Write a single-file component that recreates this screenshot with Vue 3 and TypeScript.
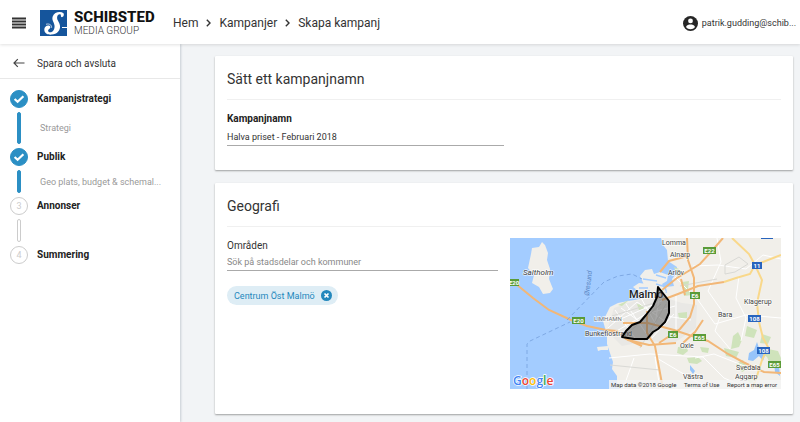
<script setup lang="ts">
import { ref } from 'vue'

interface Step {
  title: string
  sub?: string
  done: boolean
}

const steps: Step[] = [
  { title: 'Kampanjstrategi', sub: 'Strategi', done: true },
  { title: 'Publik', sub: 'Geo plats, budget & schemal...', done: true },
  { title: 'Annonser', done: false },
  { title: 'Summering', done: false },
]

const campaignName = ref('Halva priset - Februari 2018')
const areaQuery = ref('')
const areas = ref<string[]>(['Centrum Öst Malmö'])

function removeArea(name: string): void {
  areas.value = areas.value.filter((a) => a !== name)
}
</script>

<template>
  <div class="app">
    <header class="topbar">
      <button class="menu" type="button" aria-label="Meny">
        <svg width="14" height="12" viewBox="0 0 14 12"><path d="M0 1.500h14M0 4.500h14M0 7.500h14M0 10.500h14" stroke="#333" stroke-width="1.900" /></svg>
      </button>
      <a class="brand" href="#">
        <svg width="27" height="26" viewBox="0 0 27 26">
          <path d="M0 0h27v26H0z" fill="#15559c" />
          <path d="M23.500 3.200C20.500 1 14.200 2 12.700 6.500C11.500 10 14 12 14.500 15.500C15.100 19.600 12.300 23 9.300 22.200C7.600 21.700 7.800 20 9.200 19.100C11 17.900 10.700 15.800 8.900 15.500C6.400 15.100 4.200 17 4.300 19.700C4.500 23.300 7.600 24.900 11.600 24.600C17.100 24.200 20.500 20.500 20 15.700C19.600 12.200 16.800 10.400 17.100 7.300C17.300 5 18.900 3.900 20.200 4.300C21.600 4.800 20.300 6.300 21.300 7C22.600 7.800 24.700 5.300 23.500 3.200Z" fill="#fff" />
          <path d="M22 17.500h5" stroke="#fff" stroke-width="1" />
          <path d="M6 14.300c3-1 6 .5 5.600 3.500" fill="none" stroke="#fff" stroke-width=".7" />
        </svg>
        <span class="brand-text"><strong>SCHIBSTED</strong><span>MEDIA GROUP</span></span>
      </a>
      <nav class="crumbs" aria-label="Sökväg">
        <a href="#">Hem</a>
        <svg width="5" height="8" viewBox="0 0 5 8"><path d="M.8.8 4 4 .8 7.200" /></svg>
        <a href="#">Kampanjer</a>
        <svg width="5" height="8" viewBox="0 0 5 8"><path d="M.8.8 4 4 .8 7.200" /></svg>
        <a href="#">Skapa kampanj</a>
      </nav>
      <button class="user" type="button">
        <svg width="15" height="15" viewBox="0 0 15 15">
          <circle cx="7.500" cy="7.500" r="7.500" fill="#262626" />
          <circle cx="7.500" cy="4.900" r="2.400" fill="#fff" />
          <path d="M3 11c.6-1.900 2.800-2.500 4.500-2.500s3.900.6 4.500 2.500c-1.100 1.500-2.700 2.200-4.500 2.200S4.100 12.500 3 11Z" fill="#fff" />
        </svg>
        <span>patrik.gudding@schib...</span>
      </button>
    </header>

    <div class="body">
      <aside class="sidebar">
        <a class="back" href="#">
          <svg width="12" height="10" viewBox="0 0 12 10"><path d="M11.500 5H1M4.800 1.200 1 5l3.800 3.800" fill="none" stroke="#444" stroke-width="1.200" /></svg>
          <span>Spara och avsluta</span>
        </a>
        <ol class="steps">
          <li v-for="(step, i) in steps" :key="step.title" :class="['step', { done: step.done, tall: i === 0 }]">
            <div class="rail">
              <span class="dot">
                <svg v-if="step.done" width="12" height="10" viewBox="0 0 12 10"><path d="m1.600 5 3 2.800 5.800-5.600" fill="none" stroke="#fff" stroke-width="2.200" /></svg>
                <template v-else>{{ i + 1 }}</template>
              </span>
              <span v-if="i < steps.length - 1" class="bar"></span>
            </div>
            <div class="step-text">
              <strong>{{ step.title }}</strong>
              <span v-if="step.sub" class="sub">{{ step.sub }}</span>
            </div>
          </li>
        </ol>
      </aside>

      <main class="main">
        <section class="card">
          <h2>Sätt ett kampanjnamn</h2>
          <div class="field name-field">
            <label class="strong" for="name">Kampanjnamn</label>
            <input id="name" v-model="campaignName" type="text" />
          </div>
        </section>

        <section class="card geo">
          <h2>Geografi</h2>
          <div class="geo-row">
            <div class="geo-form">
              <div class="field">
                <label for="area">Områden</label>
                <input id="area" v-model="areaQuery" class="compact" type="text" placeholder="Sök på stadsdelar och kommuner" />
              </div>
              <div class="chips">
                <span v-for="area in areas" :key="area" class="chip">
                  {{ area }}
                  <button type="button" :aria-label="'Ta bort ' + area" @click="removeArea(area)">
                    <svg width="11" height="11" viewBox="0 0 11 11"><circle cx="5.500" cy="5.500" r="5.500" fill="#2488bd" /><path d="m3.500 3.500 4 4m0-4-4 4" stroke="#fff" stroke-width="1.700" /></svg>
                  </button>
                </span>
              </div>
            </div>
            <svg class="map" viewBox="0 0 271 151">
              <path d="M0 0h271v151H0z" fill="#a3ccff" />
              <!-- mainland -->
              <path d="M151 0 153 7 157 12 158 23 167 29 166 36 162 41 164 48 156 49 157 55 149 52 145 56 137 57 133 60 125 62 118 63 108 65 100 69 98 73 93 83 95 90 97 98 97 106 99 112 101 118 103 124 102 131 107 138 107 145 110 151H271V0Z" fill="#f1efea" />
              <path d="M87 109 98 108v4h-7l-3 1ZM130 38l5-6 7-1 2 5 6-2 8 3-1 6-5 3 4 8-10 4-15-3 3-8Z" fill="#f1efea" />
              <path d="M123 49l6-4 8 1 7 7-5 7-9-3-3-5Z" fill="#f1efea" />
              <path d="M129 50h9M132 54l8-1M146 37l10 3M133 41l14 2M146 46l10 3" stroke="#a3ccff" stroke-width="1.500" />
              <!-- built-up area -->
              <path d="M104 70 124 63 153 59 172 65 187 67 186 90 164 105 137 103 112 108 97 93Z" fill="#e9e8e5" />
              <!-- island -->
              <path d="M32 4 35 7 38 15 37 22 40 31 39 41 43 51 40 55 33 56 29 49 22 45 24 37 18 30 21 16 22 10 29 9Z" fill="#f1efea" />
              <g fill="#cfe3bb">
                <path d="M108 67 119 62l-7 6ZM164 29l3 9 4 1-2-8ZM172 44l7-1-1 8 4 6-8 1ZM127 66l6 1 1 4-5 1ZM168 75l9-1v6l-8 1ZM168 109l8-1 2 5-5 4-6-2ZM177 120l11-1 4 4-5 3-8-1ZM190 109l9 1-1 5-6-1Z" />
                <path d="M223 98 228 94 232 102 229 109 221 111ZM214 110 229 114 226 120 216 118ZM237 88 247 92 244 100 235 98ZM249 114 258 111 268 113 271 120 271 127 260 126 257 119ZM226 126l7-4 5 9-6 3ZM235 140l7 0 3 4-5 1ZM252 96l9 3-3 7-8-1Z" />
              </g>
              <g fill="#96c4fa"><path d="M247 104l3 9 5 4-2 6-4-5-6 5-5-1 1-7 5-3ZM264 124l5 4 1 10-5-4ZM180 127l5 6-2 3-3-4Z" /></g>
              <!-- minor roads -->
              <g fill="none" stroke="#fff" stroke-width="1">
                <path d="M98 90 127 64 156 84M104 84 156 61M105 72 125 100M116 66 138 98M131 60 149 92M98 98 136 76 165 68M150 54 145 87M140 102 164 76M124 120 113 151M99 120 140 116 193 119 214 140 240 151M150 151 145 119 199 151M183 28 208 27 236 31 253 17 271 21M165 39 188 62 205 86 236 77 271 80M207 0 211 24 198 53 212 73 205 93 220 111M229 38 226 60 236 80 231 103M185 120 204 116 237 129M111 70 133 86M156 78 181 82M166 56 166 93" />
              </g>
              <g fill="none" stroke="#d9d9d5" stroke-width="1"><path d="M102 78 144 65M117 96 151 66M130 110 156 66M100 127 150 132M170 48 207 41M215 36v-9l14-8 9 7-13 8Z" /></g>
              <!-- main roads -->
              <g fill="none" stroke="#f2b777" stroke-width="2">
                <path d="M6 46 23 60 39 72 61 82 77 88 96 92 110 95 118 102 139 107 166 105M96 92 107 93 116 101 132 108" />
                <path d="M177 0 178 22 184 40 184 66 180 79 170 91 149 105M213 0 200 15 190 26 167 40 152 52M150 34 159 23 178 18M152 62 168 56 188 48 214 44M171 41 175 57M113 85 138 85 164 92 185 99 198 103 218 116 233 124 254 134 271 135M137 73 137 95 145 108 153 151M173 105 185 94 193 82" />
              </g>
              <g fill="none" stroke="#f9d88a" stroke-width="2"><path d="M222 0 239 16 245 27 240 36 226 40 214 44M245 27 271 17M245 27 252 42 247 65 249 84 253 100 258 109 252 122 247 138 242 151" /></g>
              <!-- ferry lines -->
              <g fill="none" stroke="#7fa9e4" stroke-width="1" stroke-dasharray="4 3"><path d="M57 82 94 44 108 38 122 36 132 41M17 151V106L20 103 60 84" /></g>
              <g class="place">
                <text x="13" y="37" class="island">Saltholm</text>
                <text x="152" y="7">Lomma</text><text x="160" y="19">Alnarp</text><text x="158" y="37">Arlöv</text>
                <text x="119" y="60" class="city">Malmö</text>
                <text x="84" y="83" class="district">LIMHAMN</text>
                <text x="75" y="98">Bunkeflostrand</text>
                <text x="234" y="66">Klagerup</text><text x="208" y="79">Bara</text><text x="170" y="110">Oxie</text>
                <text x="226" y="132">Svedala</text><text x="225" y="141">Aggarp</text><text x="173" y="141">Västra</text>
                <text x="79" y="58" class="sea" transform="rotate(-83 79 58)">Øresund</text>
              </g>
              <!-- selected area -->
              <path d="M148 49 159 63 159 75 155 84 148 91 143 94 137 101 124 101 112 99 116 93 122 87 130 84 136 77 143 68 147 59Z" fill="#555" fill-opacity=".5" stroke="#000" stroke-width="2" stroke-linejoin="round" />
              <g class="shields">
                <path d="M0 41h9v7H0ZM62 79h13v7H62ZM193 9h13v7h-13ZM180 54h10v7h-10ZM158 93h10v7h-10ZM183 96h13v7h-13ZM258 123h13v7h-13Z" fill="#5a9b38" />
                <path d="M242 24h10v7h-10ZM238 77h13v7h-13ZM247 109h13v7h-13ZM251 0h12v1h-12Z" fill="#2864bd" />
                <text x="4" y="47">E20</text><text x="68.500" y="85">E20</text><text x="199.500" y="15">E22</text>
                <text x="185" y="60">E6</text><text x="163" y="99">E6</text><text x="189.500" y="102">E65</text><text x="264.500" y="129">E65</text>
                <text x="247" y="30">11</text><text x="244.500" y="83">108</text><text x="253.500" y="115">108</text>
              </g>
              <path d="M99 142h172v9H99Z" fill="#f5f5f5" fill-opacity=".8" />
              <text x="3" y="147" class="google"><tspan fill="#4285f4">G</tspan><tspan fill="#ea4335">o</tspan><tspan fill="#fbbc05">o</tspan><tspan fill="#4285f4">g</tspan><tspan fill="#34a853">l</tspan><tspan fill="#ea4335">e</tspan></text>
              <g class="legal">
                <text x="101" y="149">Map data ©2018 Google</text>
                <a href="#"><text x="174" y="149">Terms of Use</text></a>
                <a href="#"><text x="217" y="149">Report a map error</text></a>
              </g>
            </svg>
          </div>
        </section>
      </main>
    </div>
  </div>
</template>

<style>
body {
  margin: 0;
}
</style>

<style scoped>
.app {
  min-height: 100vh;
  display: flex;
  flex-direction: column;
  font-family: Roboto, "Liberation Sans", sans-serif;
  font-size: 10px;
  color: #333;
  background: #f2f4f6;
}
.app * {
  box-sizing: border-box;
}
a {
  color: inherit;
  text-decoration: none;
}
button {
  border: 0;
  padding: 0;
  background: none;
  font: inherit;
  color: inherit;
  display: flex;
  align-items: center;
}
.topbar {
  height: 44px;
  display: flex;
  align-items: center;
  padding: 2px 4px 0 12px;
  background: #fff;
  box-shadow: 0 1px 3px rgba(0, 0, 0, 0.12);
  position: relative;
}
.brand {
  display: flex;
  align-items: center;
  gap: 7px;
  margin-left: 14px;
  width: 133px;
}
.brand-text {
  display: flex;
  flex-direction: column;
  font-size: 10px;
  font-weight: 300;
  line-height: 12px;
  white-space: nowrap;
}
.brand strong {
  font-size: 15px;
  line-height: 16px;
  font-weight: 800;
  color: #111;
}
.crumbs {
  display: flex;
  align-items: center;
  gap: 8px;
  font-size: 12px;
}
.crumbs path {
  fill: none;
  stroke: #333;
  stroke-width: 1.4;
}
.user {
  margin-left: auto;
  gap: 4px;
  font-size: 9px;
}
.body {
  flex: 1;
  display: flex;
}
.sidebar {
  width: 180px;
  flex: none;
  background: #fff;
  box-shadow: 1px 0 2px rgba(70, 90, 110, 0.25);
}
.back {
  display: flex;
  align-items: center;
  gap: 12px;
  height: 35px;
  padding: 4px 13px 0;
  border-bottom: 1px solid #e8e8e8;
}
.steps {
  list-style: none;
  margin: 0;
  padding: 11px 10px 0;
}
.step {
  display: flex;
  gap: 9px;
  height: 49px;
}
.step.tall {
  height: 58px;
}
.rail,
.step-text {
  display: flex;
  flex-direction: column;
}
.rail {
  width: 18px;
  align-items: center;
}
.dot {
  width: 18px;
  height: 18px;
  border: 1px solid #ccc;
  border-radius: 50%;
  display: grid;
  place-items: center;
  font-size: 9px;
  color: #ccc;
}
.bar {
  flex: 1;
  width: 4px;
  margin: 4px 0;
  border: 1px solid #ccc;
  border-radius: 2px;
}
.done .dot,
.done .bar {
  background: #2b8fc4;
  border-color: #2b8fc4;
}
.step-text strong {
  line-height: 18px;
  color: #222;
}
.sub {
  flex: 1;
  display: flex;
  align-items: center;
  padding-left: 3px;
  color: #999;
  font-size: 9px;
  white-space: nowrap;
}
.main {
  flex: 1;
  min-width: 0;
  display: flex;
  flex-direction: column;
  gap: 13px;
  padding: 12px 7px 8px 35px;
}
.card {
  background: #fff;
  padding: 0 12px 24px;
  border-radius: 1px;
  box-shadow: 0 1px 2px rgba(0, 0, 0, 0.35);
}
.geo {
  flex: 1;
}
h2 {
  margin: 0;
  padding: 13px 0 10px;
  border-bottom: 1px solid #f0f0f0;
  font-size: 14px;
  line-height: 20px;
  font-weight: 400;
}
.field {
  display: flex;
  flex-direction: column;
}
.name-field {
  width: 50%;
  padding-top: 12px;
}
label {
  line-height: 14px;
}
.strong {
  font-weight: 700;
  color: #222;
}
input {
  width: 100%;
  height: 20px;
  padding: 2px 0 0;
  border: 0;
  border-bottom: 1px solid #aaa;
  font: inherit;
  font-size: 9px;
  color: #333;
  background: none;
  outline: none;
}
input.compact {
  height: 18px;
  padding: 0;
}
input::placeholder {
  color: #888;
  opacity: 1;
}
.geo-row {
  display: grid;
  grid-template-columns: 1fr 1fr;
  gap: 12px;
  padding-top: 11px;
}
.geo-form {
  padding-top: 1px;
}
.chips {
  display: flex;
  padding-top: 15px;
}
.chip {
  display: flex;
  align-items: center;
  gap: 6px;
  height: 19px;
  padding: 0 6px 0 7px;
  border-radius: 10px;
  background: #deedf5;
  font-size: 9px;
  color: #2488bd;
}
.map {
  display: block;
  width: 100%;
}
.place text {
  font-size: 7px;
  fill: #444;
  stroke: #fff;
  stroke-width: 1.5px;
  stroke-opacity: 0.7;
  paint-order: stroke;
}
.place .island {
  font-size: 8px;
  font-style: italic;
}
.place .city {
  font-size: 11px;
  font-weight: 500;
  fill: #222;
}
.place .district {
  font-size: 6px;
  fill: #777;
}
.place .sea {
  font-size: 7px;
  font-style: italic;
  fill: #5b86c4;
  stroke: none;
}
.shields text {
  font-size: 6px;
  font-weight: 700;
  fill: #fff;
  text-anchor: middle;
}
.google {
  font-family: "Open Sans", sans-serif;
  font-size: 12px;
  font-weight: 600;
  stroke: #fff;
  stroke-width: 1.5px;
  paint-order: stroke;
}
.legal text {
  font-size: 6px;
  fill: #333;
}
</style>
